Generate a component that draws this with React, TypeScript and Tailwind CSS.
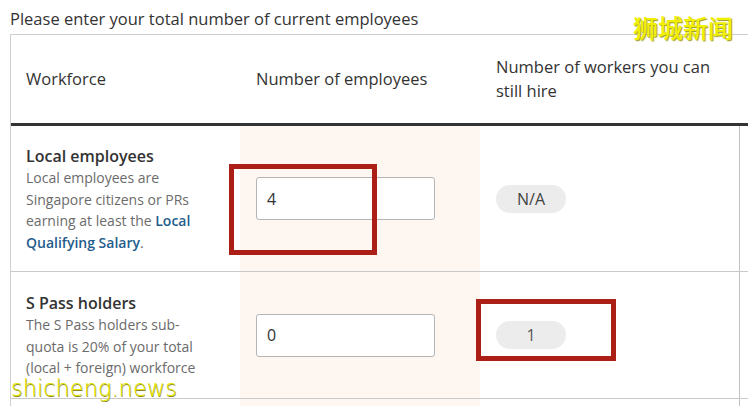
import React from "react";

const font = { fontFamily: '"Open Sans", "Liberation Sans", sans-serif' };

export default function App() {
  return (
    <div
      className="relative w-[748px] h-[406px] overflow-hidden bg-white text-[#333]"
      style={font}
    >
      <p className="h-[34px] pl-[10px] pt-[7px] text-[16.5px] leading-[24px] text-[#333]">
        Please enter your total number of current employees
      </p>
      <div className="ml-[10px] border-l border-t border-[#cfcfcf]">
        {/* header */}
        <div className="flex h-[91px] border-b-[3px] border-[#333] text-[16.5px] leading-[24px]">
          <div className="flex w-[229px] shrink-0 items-center pl-[15px]">Workforce</div>
          <div className="flex w-[240px] shrink-0 items-center pl-[16px]">Number of employees</div>
          <div className="flex w-[260px] shrink-0 items-center pl-[16px] pr-[16px]">
            Number of workers you can still hire
          </div>
          <div className="flex-1" />
        </div>
        {/* row 1 */}
        <div className="flex h-[146px] border-b border-[#c9c9c9]">
          <div className="w-[229px] shrink-0 pl-[15px] pt-[19px]">
            <div className="text-[16px] font-semibold leading-[22px] text-[#333]">Local employees</div>
            <div className="w-[180px] text-[14px] leading-[21.5px] text-[#6b6b6b]">
              Local employees are Singapore citizens or PRs earning at least the{" "}
              <span className="font-semibold text-[#1f5d8c]">Local Qualifying Salary</span>.
            </div>
          </div>
          <div className="flex w-[240px] shrink-0 items-center bg-[#fef6f1] pl-[16px]">
            <input
              readOnly
              value="4"
              className="h-[43px] w-[179px] rounded-[3px] border border-[#b5b5b5] bg-white pl-[10px] text-[16px] text-[#333] outline-none"
              style={font}
            />
          </div>
          <div className="flex w-[260px] shrink-0 items-center border-r border-[#c2c2c2] pl-[16px]">
            <div className="flex h-[28px] w-[70px] items-center justify-center rounded-full bg-[#ececec] text-[16px] text-[#444]">
              N/A
            </div>
          </div>
          <div className="flex-1" />
        </div>
        {/* row 2 */}
        <div className="flex h-[127px] border-b border-[#c9c9c9]">
          <div className="w-[229px] shrink-0 pl-[15px] pt-[20px]">
            <div className="text-[16px] font-semibold leading-[22px] text-[#333]">S Pass holders</div>
            <div className="w-[180px] text-[14px] leading-[21.5px] text-[#6b6b6b]">
              The S Pass holders sub-quota is 20% of your total (local + foreign) workforce
            </div>
          </div>
          <div className="flex w-[240px] shrink-0 items-center bg-[#fef6f1] pl-[16px]">
            <input
              readOnly
              value="0"
              className="h-[43px] w-[179px] rounded-[3px] border border-[#b5b5b5] bg-white pl-[10px] text-[16px] text-[#333] outline-none"
              style={font}
            />
          </div>
          <div className="flex w-[260px] shrink-0 items-center border-r border-[#c2c2c2] pl-[16px]">
            <div className="flex h-[28px] w-[70px] items-center justify-center rounded-full bg-[#ececec] text-[16px] text-[#555]">
              1
            </div>
          </div>
          <div className="flex-1" />
        </div>
        <div className="flex h-[20px]">
          <div className="w-[229px] shrink-0" />
          <div className="w-[240px] shrink-0 bg-[#fef6f1]" />
          <div className="w-[260px] shrink-0 border-r border-[#c2c2c2]" />
        </div>
      </div>

      {/* annotation boxes */}
      <div className="absolute left-[229px] top-[164px] h-[91px] w-[148px] border-[5px] border-[#ac1f17]" />
      <div className="absolute left-[476px] top-[299px] h-[62px] w-[140px] border-[5px] border-[#ac1f17]" />

      {/* watermarks */}
      <div
        className="absolute left-[633px] top-[12px] text-[25px] font-medium leading-[30px] text-[#f0f000]"
        style={{
          fontFamily: '"Noto Sans CJK SC", sans-serif',
          textShadow: "1px 1px 1px #9a9a20",
        }}
      >
        狮城新闻
      </div>
      <div
        className="absolute left-[11px] top-[373px] text-[22.5px] font-extralight leading-[30px] text-[#e4e400]"
        style={{
          fontFamily: '"DejaVu Sans", sans-serif',
          textShadow: "0.5px 0.5px 0px #8a8a20",
        }}
      >
        shicheng.news
      </div>
    </div>
  );
}
